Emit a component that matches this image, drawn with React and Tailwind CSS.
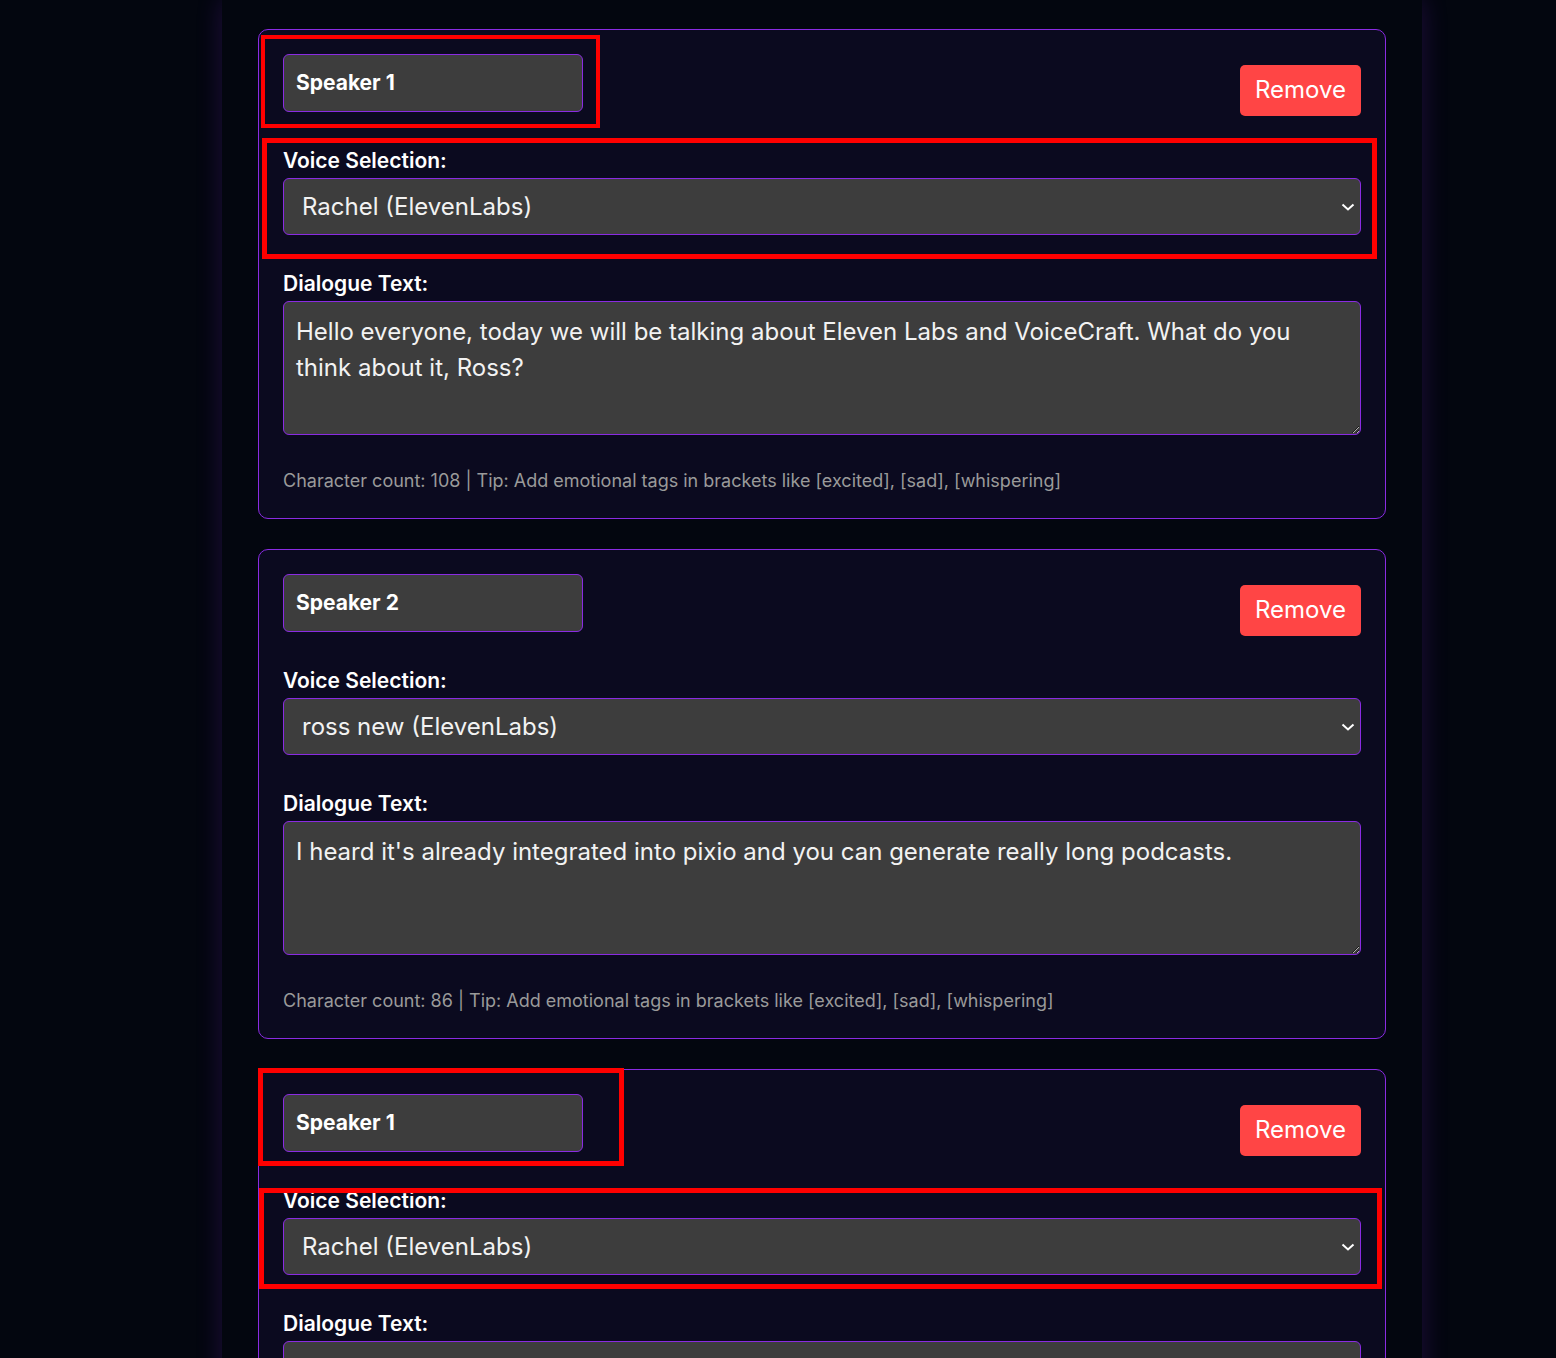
import React from "react";

const cards = [
  {
    speaker: "Speaker 1",
    voice: "Rachel (ElevenLabs)",
    text: "Hello everyone, today we will be talking about Eleven Labs and VoiceCraft. What do you think about it, Ross?",
    count: 108,
    marks: "a",
  },
  {
    speaker: "Speaker 2",
    voice: "ross new (ElevenLabs)",
    text: "I heard it's already integrated into pixio and you can generate really long podcasts.",
    count: 86,
    marks: null,
  },
  {
    speaker: "Speaker 1",
    voice: "Rachel (ElevenLabs)",
    text: "",
    count: 0,
    marks: "b",
  },
];

function Chevron() {
  return (
    <svg width="14" height="8" viewBox="0 0 14 8" className="shrink-0">
      <path d="M1.5 1.5 L7 6.5 L12.5 1.5" fill="none" stroke="#ffffff" strokeWidth="2" />
    </svg>
  );
}

function Card({ c }) {
  return (
    <div className="relative rounded-[10px] border border-[#8a2be2] bg-[#0b0a1f] p-6">
      <div className="flex items-start justify-between">
        <input
          readOnly
          value={c.speaker}
          className="h-[58px] w-[300px] rounded-md border border-[#8a2be2] bg-[#3d3d3d] px-3 pb-[2px] text-[21px] font-bold text-white outline-none"
        />
        <button className="mt-[11px] h-[51px] w-[121px] rounded-[5px] bg-[#ff4545] pb-[2px] text-[24px] leading-none text-white">
          Remove
        </button>
      </div>
      <div className="mt-[31px] mb-[3px] text-[21px] font-semibold leading-7 text-white">Voice Selection:</div>
      <div className="flex h-[57px] w-full items-center justify-between rounded-md border border-[#8a2be2] bg-[#3d3d3d] pl-[18px] pr-[5px] text-[24px] text-[#f2f2f2]">
        <span>{c.voice}</span>
        <Chevron />
      </div>
      <div className="mt-[35px] mb-[3px] text-[21px] font-semibold leading-7 text-white">Dialogue Text:</div>
      <textarea
        readOnly
        value={c.text}
        className="block h-[134px] w-full rounded-md border border-[#8a2be2] bg-[#3d3d3d] p-3 text-[24px] leading-9 text-[#f2f2f2] outline-none [color-scheme:dark]"
      />
      <div className="mt-8 text-[18px] leading-[27px] text-[#9a9a9a]">
        Character count: {c.count} | Tip: Add emotional tags in brackets like [excited], [sad], [whispering]
      </div>
      {c.marks === "a" && (
        <>
          <div className="absolute left-[2px] top-[5px] h-[93px] w-[339px] border-[4px] border-[#ff0000]" />
          <div className="absolute left-[3px] top-[108px] h-[121px] w-[1115px] border-[5px] border-[#ff0000]" />
        </>
      )}
      {c.marks === "b" && (
        <>
          <div className="absolute left-[-1px] top-[-2px] h-[98px] w-[366px] border-[5px] border-[#ff0000]" />
          <div className="absolute left-0 top-[118px] h-[101px] w-[1123px] border-[5px] border-[#ff0000]" />
        </>
      )}
    </div>
  );
}

export default function App() {
  return (
    <div className="h-[1358px] overflow-hidden bg-[#03060f]" style={{ fontFamily: "Inter, 'Noto Sans', sans-serif" }}>
      <div className="ml-[222px] w-[1200px] min-h-full bg-[#03060f] px-9 pt-[29px] shadow-[0_0_24px_rgba(138,43,226,0.22)]">
        <div className="flex flex-col gap-[30px]">
          {cards.map((c, i) => (
            <Card key={i} c={c} />
          ))}
        </div>
      </div>
    </div>
  );
}
